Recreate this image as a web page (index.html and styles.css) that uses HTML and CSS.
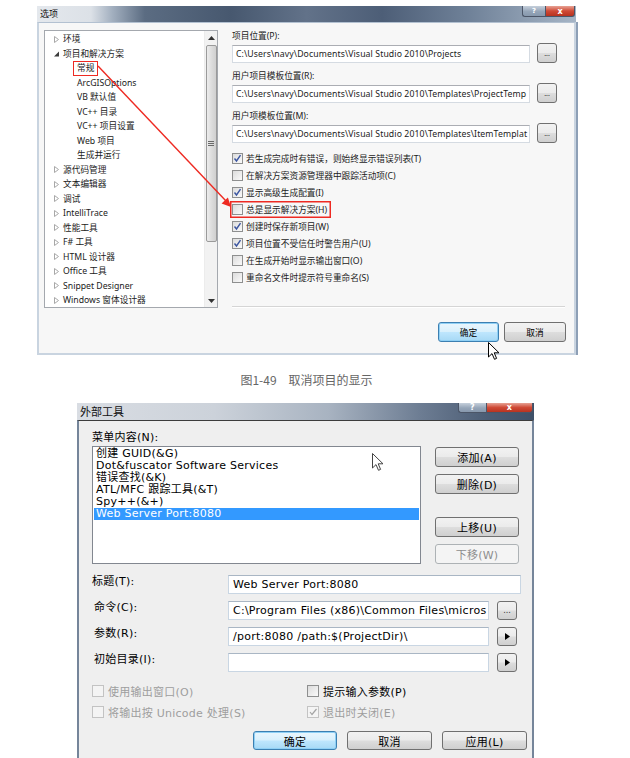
FILE: index.html
```html
<!DOCTYPE html>
<html lang="zh-CN">
<head>
<meta charset="utf-8">
<title>选项 / 外部工具</title>
<link rel="stylesheet" href="styles.css">
</head>
<body>
<div class="page">

  <div class="dlg dlg1">
    <div class="tb tb1">
      <span class="tb-title">选项</span>
      <div class="tb-btns"><span class="tb-help">?</span><span class="tb-close">x</span></div>
    </div>
    <div class="body1">
      <div class="tree">
        <ul class="tree-list">
          <li class="ti"><svg class="tw" viewBox="0 0 5 7"><path d="M0.5 0.5L4.5 3.5L0.5 6.5Z" fill="none" stroke="#a8a8a8"/></svg>环境</li>
          <li class="ti"><svg class="tw" viewBox="0 0 5 7"><path d="M5 1.5V6.5H0Z" fill="#3c3c3c"/></svg>项目和解决方案</li>
          <li class="ti sub"><span class="mark">常规</span></li>
          <li class="ti sub">ArcGISOptions</li>
          <li class="ti sub">VB 默认值</li>
          <li class="ti sub">VC++ 目录</li>
          <li class="ti sub">VC++ 项目设置</li>
          <li class="ti sub">Web 项目</li>
          <li class="ti sub">生成并运行</li>
          <li class="ti"><svg class="tw" viewBox="0 0 5 7"><path d="M0.5 0.5L4.5 3.5L0.5 6.5Z" fill="none" stroke="#a8a8a8"/></svg>源代码管理</li>
          <li class="ti"><svg class="tw" viewBox="0 0 5 7"><path d="M0.5 0.5L4.5 3.5L0.5 6.5Z" fill="none" stroke="#a8a8a8"/></svg>文本编辑器</li>
          <li class="ti"><svg class="tw" viewBox="0 0 5 7"><path d="M0.5 0.5L4.5 3.5L0.5 6.5Z" fill="none" stroke="#a8a8a8"/></svg>调试</li>
          <li class="ti"><svg class="tw" viewBox="0 0 5 7"><path d="M0.5 0.5L4.5 3.5L0.5 6.5Z" fill="none" stroke="#a8a8a8"/></svg>IntelliTrace</li>
          <li class="ti"><svg class="tw" viewBox="0 0 5 7"><path d="M0.5 0.5L4.5 3.5L0.5 6.5Z" fill="none" stroke="#a8a8a8"/></svg>性能工具</li>
          <li class="ti"><svg class="tw" viewBox="0 0 5 7"><path d="M0.5 0.5L4.5 3.5L0.5 6.5Z" fill="none" stroke="#a8a8a8"/></svg>F# 工具</li>
          <li class="ti"><svg class="tw" viewBox="0 0 5 7"><path d="M0.5 0.5L4.5 3.5L0.5 6.5Z" fill="none" stroke="#a8a8a8"/></svg>HTML 设计器</li>
          <li class="ti"><svg class="tw" viewBox="0 0 5 7"><path d="M0.5 0.5L4.5 3.5L0.5 6.5Z" fill="none" stroke="#a8a8a8"/></svg>Office 工具</li>
          <li class="ti"><svg class="tw" viewBox="0 0 5 7"><path d="M0.5 0.5L4.5 3.5L0.5 6.5Z" fill="none" stroke="#a8a8a8"/></svg>Snippet Designer</li>
          <li class="ti"><svg class="tw" viewBox="0 0 5 7"><path d="M0.5 0.5L4.5 3.5L0.5 6.5Z" fill="none" stroke="#a8a8a8"/></svg>Windows 窗体设计器</li>
        </ul>
        <div class="vscroll">
          <span class="sb-arrow"><svg width="7" height="4" viewBox="0 0 7 4"><path d="M0 4L3.5 0L7 4Z" fill="#333"/></svg></span>
          <span class="sb-thumb"><svg width="6" height="5" viewBox="0 0 6 5"><path d="M0 0.5H6M0 2.5H6M0 4.5H6" stroke="#6a6a6a" stroke-width="1"/></svg></span>
          <span class="sb-space"></span>
          <span class="sb-arrow"><svg width="7" height="4" viewBox="0 0 7 4"><path d="M0 0L3.5 4L7 0Z" fill="#333"/></svg></span>
        </div>
      </div>

      <div class="settings">
        <div class="flabel">项目位置(P):</div>
        <div class="frow"><div class="input">C:\Users\navy\Documents\Visual Studio 2010\Projects</div><span class="btn dots">...</span></div>
        <div class="flabel">用户项目模板位置(R):</div>
        <div class="frow"><div class="input">C:\Users\navy\Documents\Visual Studio 2010\Templates\ProjectTemp</div><span class="btn dots">...</span></div>
        <div class="flabel">用户项模板位置(M):</div>
        <div class="frow"><div class="input">C:\Users\navy\Documents\Visual Studio 2010\Templates\ItemTemplat</div><span class="btn dots">...</span></div>

        <ul class="checks">
          <li class="chk"><span class="box"><svg viewBox="0 0 9 9"><path d="M1.5 4.5L3.5 7L7.5 1.2" fill="none" stroke="#3b55a0" stroke-width="1.4"/></svg></span>若生成完成时有错误，则始终显示错误列表(T)</li>
          <li class="chk"><span class="box"></span>在解决方案资源管理器中跟踪活动项(C)</li>
          <li class="chk"><span class="box"><svg viewBox="0 0 9 9"><path d="M1.5 4.5L3.5 7L7.5 1.2" fill="none" stroke="#3b55a0" stroke-width="1.4"/></svg></span>显示高级生成配置(I)</li>
          <li class="chk hl"><span class="box"></span>总是显示解决方案(H)</li>
          <li class="chk"><span class="box"><svg viewBox="0 0 9 9"><path d="M1.5 4.5L3.5 7L7.5 1.2" fill="none" stroke="#3b55a0" stroke-width="1.4"/></svg></span>创建时保存新项目(W)</li>
          <li class="chk"><span class="box"><svg viewBox="0 0 9 9"><path d="M1.5 4.5L3.5 7L7.5 1.2" fill="none" stroke="#3b55a0" stroke-width="1.4"/></svg></span>项目位置不受信任时警告用户(U)</li>
          <li class="chk"><span class="box"></span>在生成开始时显示输出窗口(O)</li>
          <li class="chk"><span class="box"></span>重命名文件时提示符号重命名(S)</li>
        </ul>
        <div class="sep"></div>
        <div class="btnrow"><span class="btn default w61">确定</span><span class="btn w62">取消</span></div>
      </div>
    </div>

    <svg class="anno" width="539" height="349" viewBox="0 0 539 349">
      <line x1="61" y1="60" x2="189" y2="195" stroke="#ee2a22" stroke-width="1.4"/>
      <path d="M194 201L184.6 197.4L190.9 191.4Z" fill="#ee2a22"/>
    </svg>
    <svg class="cursor c1" width="12" height="19" viewBox="0 0 12 19"><path d="M0.5 0.5V15L4 11.6L6.5 17.3L8.6 16.4L6.2 10.8H11Z" fill="#fff" stroke="#000" stroke-width="1" stroke-linejoin="round"/></svg>
  </div>

  <p class="caption">图1-49　取消项目的显示</p>

  <div class="dlg dlg2">
    <div class="tb tb2">
      <span class="tb-title">外部工具</span>
      <div class="tb-btns"><span class="tb-help">?</span><span class="tb-close">x</span></div>
    </div>
    <div class="body2">
      <div class="lbl">菜单内容(N):</div>
      <div class="listarea">
        <ul class="listbox">
          <li class="li">创建 GUID(&amp;G)</li>
          <li class="li">Dot&amp;fuscator Software Services</li>
          <li class="li">错误查找(&amp;K)</li>
          <li class="li">ATL/MFC 跟踪工具(&amp;T)</li>
          <li class="li">Spy++(&amp;+)</li>
          <li class="li sel">Web Server Port:8080</li>
        </ul>
        <div class="btncol">
          <span class="btn b2 m1">添加(A)</span>
          <span class="btn b2 m7">删除(D)</span>
          <span class="btn b2 m23">上移(U)</span>
          <span class="btn b2 m7 disabled">下移(W)</span>
        </div>
      </div>

      <div class="fields">
        <div class="frow2"><span class="flabel2">标题(T):</span><div class="input2 wide">Web Server Port:8080</div></div>
        <div class="frow2"><span class="flabel2 ind">命令(C):</span><div class="input2 short">C:\Program Files (x86)\Common Files\micros</div><span class="btn sbtn">...</span></div>
        <div class="frow2"><span class="flabel2 ind">参数(R):</span><div class="input2 short">/port:8080 /path:$(ProjectDir)\</div><span class="btn sbtn"><svg width="5" height="7" viewBox="0 0 5 7"><path d="M0 0L5 3.5L0 7Z" fill="#000"/></svg></span></div>
        <div class="frow2"><span class="flabel2 ind">初始目录(I):</span><div class="input2 short"></div><span class="btn sbtn"><svg width="5" height="7" viewBox="0 0 5 7"><path d="M0 0L5 3.5L0 7Z" fill="#000"/></svg></span></div>
      </div>

      <div class="opts">
        <div class="opt dis"><span class="box2"></span>使用输出窗口(O)</div>
        <div class="opt"><span class="box2 en"></span>提示输入参数(P)</div>
        <div class="opt dis"><span class="box2"></span>将输出按 Unicode 处理(S)</div>
        <div class="opt dis"><span class="box2"><svg viewBox="0 0 10 10"><path d="M2 5L4 7.5L8.5 2" fill="none" stroke="#a4a4a4" stroke-width="1.2"/></svg></span>退出时关闭(E)</div>
      </div>

      <div class="okrow">
        <span class="btn default w84">确定</span>
        <span class="btn w85">取消</span>
        <span class="btn w85">应用(L)</span>
      </div>
    </div>
    <svg class="cursor c2" width="12" height="19" viewBox="0 0 12 19"><path d="M0.5 0.5V15L4 11.6L6.5 17.3L8.6 16.4L6.2 10.8H11Z" fill="#fff" stroke="#444" stroke-width="1" stroke-linejoin="round"/></svg>
  </div>

</div>
</body>
</html>
```

FILE: styles.css
```css
* { box-sizing: border-box; margin: 0; padding: 0; }
html, body { background: #fff; overflow: hidden; }
body { width: 630px; height: 758px; font-family: "Noto Sans", "Noto Sans CJK SC", sans-serif; }
.page { width: 630px; padding-top: 6px; }

.dlg { position: relative; }

/* ---------- Title bars ---------- */
.tb { display: flex; align-items: flex-start; justify-content: space-between; }
.tb-title { color: #111; white-space: nowrap; }
.tb-btns { display: flex; }
.tb-help, .tb-close {
  display: flex; align-items: center; justify-content: center;
  color: #fff; font-weight: bold; font-family: "DejaVu Sans", sans-serif;
  border: 1px solid #4b5567; border-top: 0;
}
.tb-help { background: linear-gradient(#c5cfdb, #95a5b8 55%, #8798ad); border-radius: 0 0 0 3px; border-right: 0; }
.tb-close { background: linear-gradient(#e7a294, #cf4a36 50%, #b8321f); border-radius: 0 0 3px 0; }

/* ---------- Dialog 1 (选项) ---------- */
.dlg1 { margin-left: 37px; width: 539px; font-size: 8.7px; color: #1b1b1b; }
.tb1 {
  height: 16px;
  background: linear-gradient(90deg, #e4e8ed 0, #dce1e7 10%, #a2afbf 14%, #5b6c82 20%, #47586f 36%, #627289 50%, #4d5e77 64%, #6f8198 80%, #a6b5c6 100%);
}
.tb1 .tb-title { padding: 2px 0 0 3px; line-height: 12px; font-size: 9px; }
.tb1 .tb-btns { margin-right: 1px; }
.tb1 .tb-help { width: 23px; height: 11px; font-size: 7px; }
.tb1 .tb-close { width: 30px; height: 11px; font-size: 8px; }

.body1 {
  display: flex; gap: 14px;
  padding: 7px 9px 11px 5px;
  background: #f7f7f7;
  border: 2px solid #c9d4e0; border-top: 1px solid #b3c1d1;
  box-shadow: 2px 0 0 #8d9fb6;
}

.tree { width: 174px; height: 278px; flex: none; display: flex; background: #fff; border: 1px solid #a4a8ae; }
.tree-list { list-style: none; flex: 1; padding-top: 1px; }
.ti { height: 14.5px; line-height: 14.5px; display: flex; align-items: center; padding-left: 9px; white-space: nowrap; }
.ti.sub { padding-left: 32px; }
.tw { width: 5px; height: 7px; margin-right: 4px; flex: none; }
.mark { display: inline-block; margin-left: -4px; padding: 0 3px 0 3px; line-height: 13px; border: 1.5px solid #ee2a22; }

.vscroll { width: 13px; flex: none; display: flex; flex-direction: column; align-items: center; background: #f2f2f2; border-left: 1px solid #ececec; }
.sb-arrow { width: 12px; height: 13px; display: flex; align-items: center; justify-content: center; }
.sb-thumb {
  margin-top: 1px; width: 11px; height: 197px;
  display: flex; align-items: center; justify-content: center;
  border: 1px solid #9a9a9a; border-radius: 2px;
  background: linear-gradient(90deg, #ececec, #dadada 60%, #d0d0d0);
}
.sb-space { flex: 1; }

.settings { width: 333px; flex: none; display: flex; flex-direction: column; }
.flabel { height: 13px; line-height: 13px; white-space: nowrap; }
.frow { height: 20px; display: flex; align-items: flex-end; gap: 7px; margin-bottom: 7px; }
.input {
  width: 298px; height: 18px; flex: none;
  background: #fff; border: 1px solid #d5dbe2; border-top-color: #abadb3;
  padding: 0 3px; line-height: 16px; white-space: nowrap; overflow: hidden;
  letter-spacing: 0.1px;
}

.btn {
  display: flex; align-items: center; justify-content: center; flex: none;
  border: 1px solid #707070; border-radius: 3px; color: #000; white-space: nowrap;
  background: linear-gradient(#f2f2f2 0, #ebebeb 48%, #dddddd 52%, #cfcfcf 100%);
}
.btn.default {
  border-color: #3c7fb1;
  background: linear-gradient(#eaf6fd 0, #d9f0fc 48%, #bee6fd 52%, #a7d9f5 100%);
  box-shadow: 0 0 0 1px #8fd0f5 inset;
}
.dots { width: 20px; height: 20px; font-size: 7px; color: #333; }

.checks { list-style: none; }
.chk { height: 17px; display: flex; align-items: center; gap: 3px; width: fit-content; white-space: nowrap; }
.chk.hl { margin-left: -2px; padding: 0 4px 0 2px; box-shadow: inset 0 0 0 1.5px #ee2a22; }
.box {
  width: 11px; height: 11px; flex: none; display: flex; align-items: center; justify-content: center;
  border: 1px solid #8e8f8f; background: linear-gradient(135deg, #dcdcdc, #fafafa);
}
.box svg { width: 9px; height: 9px; }

.sep { margin-top: 20px; height: 2px; border-top: 1px solid #d5d5d5; border-bottom: 1px solid #fff; }
.btnrow { margin-top: 14px; display: flex; justify-content: flex-end; gap: 5px; margin-right: -1px; }
.btnrow .btn { height: 20px; }
.w61 { width: 61px; }
.w62 { width: 62px; }

.anno { position: absolute; left: 0; top: 0; pointer-events: none; }
.cursor { position: absolute; pointer-events: none; }
.c1 { left: 451px; top: 336px; }
.c2 { left: 295px; top: 50px; }

/* ---------- Caption ---------- */
.caption {
  margin-top: 16px; height: 18px; line-height: 18px;
  padding-right: 17px; text-align: center;
  font-family: "Noto Sans CJK SC", sans-serif; font-size: 12px; color: #666;
}

/* ---------- Dialog 2 (外部工具) ---------- */
.dlg2 { margin: 14px 0 0 77px; width: 457px; font-family: "DejaVu Sans", "Noto Sans CJK SC", sans-serif; font-size: 11px; letter-spacing: 0.25px; color: #000; }
.tb2 {
  height: 17px;
  background: linear-gradient(90deg, #d9dde3 0, #ccd2da 30%, #a8b3c1 55%, #6d7d93 75%, #4b5c74 90%, #3e5068 100%);
}
.tb2 .tb-title { padding: 2px 0 0 3px; line-height: 13px; font-size: 11px; letter-spacing: 0; font-family: "Noto Sans CJK SC", sans-serif; }
.tb2 .tb-help { width: 28px; height: 10px; font-size: 8px; }
.tb2 .tb-close { width: 47px; height: 10px; font-size: 8px; }
.tb2 .tb-btns { margin-right: 1px; }

.body2 {
  background: #efefef;
  border: 2px solid #75859a; border-top: 1px solid #3c3c3c; border-bottom: 0;
  padding: 11px 13px 8px 13px;
}
.lbl { height: 12px; line-height: 12px; margin-bottom: 2px; white-space: nowrap; }
.listarea { display: flex; gap: 14px; }
.listbox { width: 329px; height: 118px; flex: none; list-style: none; background: #fff; border: 1px solid #828790; padding: 1px; }
.li { height: 12px; line-height: 12px; padding-left: 2px; white-space: nowrap; }
.li.sel { background: #3399ff; color: #fff; }
.btncol { width: 84px; flex: none; display: flex; flex-direction: column; }
.b2 { height: 20px; }
.m1 { margin-top: 1px; }
.m7 { margin-top: 7px; }
.m23 { margin-top: 23px; }
.btn.disabled { color: #8d8d8d; border-color: #adb2b5; background: #f4f4f4; }

.fields { margin-top: 11px; display: flex; flex-direction: column; gap: 7px; }
.frow2 { height: 19px; display: flex; align-items: flex-start; }
.flabel2 { width: 136px; flex: none; padding-top: 1px; line-height: 12px; white-space: nowrap; }
.flabel2.ind { padding-left: 2px; }
.input2 {
  height: 19px; flex: none; background: #fff;
  border: 1px solid #c9d6e3; border-top-color: #a9b6c4;
  padding: 0 4px; line-height: 17px; white-space: nowrap; overflow: hidden;
}
.input2.wide { width: 293px; }
.input2.short { width: 261px; }
.sbtn { margin-left: 8px; width: 20px; height: 19px; font-size: 8px; color: #333; letter-spacing: 0; }

.opts { margin-top: 8px; display: grid; grid-template-columns: 215px 1fr; grid-auto-rows: 21px; align-items: center; }
.opt { display: flex; align-items: center; gap: 4px; white-space: nowrap; }
.opt.dis { color: #9e9e9e; }
.box2 {
  width: 12px; height: 12px; flex: none; display: flex; align-items: center; justify-content: center;
  border: 1px solid #c3c3c3; background: #f4f4f4;
}
.box2.en { border-color: #8e8f8f; background: linear-gradient(135deg, #dcdcdc, #fafafa); }
.box2 svg { width: 10px; height: 10px; }

.okrow { margin-top: 9px; display: flex; gap: 10px; padding-left: 161px; }
.okrow .btn { height: 19px; }
.w84 { width: 84px; }
.w85 { width: 85px; }
```
